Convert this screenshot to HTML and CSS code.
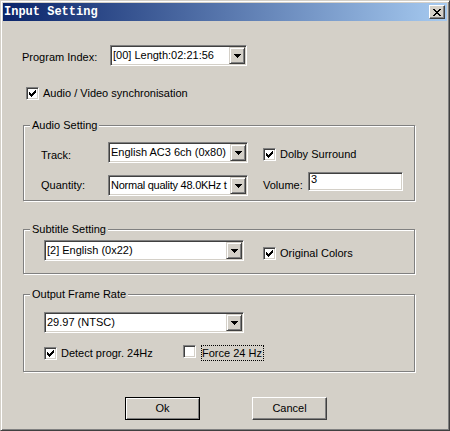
FILE: index.html
```html
<!DOCTYPE html>
<html>
<head>
<meta charset="utf-8">
<title>Input Setting</title>
<link rel="stylesheet" href="styles.css">
</head>
<body>
<div class="window">
  <div class="titlebar">
    <span class="title">Input Setting</span>
    <span class="close-btn"><svg width="8" height="7" viewBox="0 0 8 7" shape-rendering="crispEdges"><path d="M0 0h2v1h-2zM6 0h2v1h-2zM1 1h2v1h-2zM5 1h2v1h-2zM2 2h4v1h-4zM3 3h2v1h-2zM2 4h4v1h-4zM1 5h2v1h-2zM5 5h2v1h-2zM0 6h2v1h-2zM6 6h2v1h-2z" fill="#000"/></svg></span>
  </div>
  <div class="content">
    <div class="row program-row">
      <span class="lbl lbl-program">Program Index:</span>
      <div class="combo combo-program">
        <span class="combo-text">[00] Length:02:21:56</span>
        <span class="combo-btn"><svg width="7" height="4" viewBox="0 0 7 4" shape-rendering="crispEdges"><path d="M0 0h7v1h-7zM1 1h5v1h-5zM2 2h3v1h-3zM3 3h1v1h-1z" fill="#000"/></svg></span>
      </div>
    </div>

    <div class="check sync-check">
      <span class="box"><svg width="7" height="7" viewBox="0 0 7 7" shape-rendering="crispEdges"><path d="M6 0h1v1h-1zM5 1h2v1h-2zM0 2h1v1h-1zM4 2h3v1h-3zM0 3h2v1h-2zM3 3h3v1h-3zM0 4h5v1h-5zM1 5h3v1h-3zM2 6h1v1h-1z" fill="#000"/></svg></span>
      <span class="check-text">Audio / Video synchronisation</span>
    </div>

    <fieldset class="group audio-group">
      <legend>Audio Setting</legend>
      <div class="group-body audio-body">
        <div class="row track-row">
          <span class="lbl lbl-track">Track:</span>
          <div class="combo combo-audio">
            <span class="combo-text">English AC3 6ch (0x80)</span>
            <span class="combo-btn"><svg width="7" height="4" viewBox="0 0 7 4" shape-rendering="crispEdges"><path d="M0 0h7v1h-7zM1 1h5v1h-5zM2 2h3v1h-3zM3 3h1v1h-1z" fill="#000"/></svg></span>
          </div>
          <div class="check dolby-check">
            <span class="box"><svg width="7" height="7" viewBox="0 0 7 7" shape-rendering="crispEdges"><path d="M6 0h1v1h-1zM5 1h2v1h-2zM0 2h1v1h-1zM4 2h3v1h-3zM0 3h2v1h-2zM3 3h3v1h-3zM0 4h5v1h-5zM1 5h3v1h-3zM2 6h1v1h-1z" fill="#000"/></svg></span>
            <span class="check-text">Dolby Surround</span>
          </div>
        </div>
        <div class="row quantity-row">
          <span class="lbl lbl-quantity">Quantity:</span>
          <div class="combo combo-audio">
            <span class="combo-text tight">Normal quality 48.0KHz t</span>
            <span class="combo-btn"><svg width="7" height="4" viewBox="0 0 7 4" shape-rendering="crispEdges"><path d="M0 0h7v1h-7zM1 1h5v1h-5zM2 2h3v1h-3zM3 3h1v1h-1z" fill="#000"/></svg></span>
          </div>
          <span class="lbl lbl-volume">Volume:</span>
          <div class="textbox"><span class="textbox-text">3</span></div>
        </div>
      </div>
    </fieldset>

    <fieldset class="group subtitle-group">
      <legend>Subtitle Setting</legend>
      <div class="group-body subtitle-body">
        <div class="row subtitle-row">
          <div class="combo combo-wide">
            <span class="combo-text">[2] English (0x22)</span>
            <span class="combo-btn"><svg width="7" height="4" viewBox="0 0 7 4" shape-rendering="crispEdges"><path d="M0 0h7v1h-7zM1 1h5v1h-5zM2 2h3v1h-3zM3 3h1v1h-1z" fill="#000"/></svg></span>
          </div>
          <div class="check colors-check">
            <span class="box"><svg width="7" height="7" viewBox="0 0 7 7" shape-rendering="crispEdges"><path d="M6 0h1v1h-1zM5 1h2v1h-2zM0 2h1v1h-1zM4 2h3v1h-3zM0 3h2v1h-2zM3 3h3v1h-3zM0 4h5v1h-5zM1 5h3v1h-3zM2 6h1v1h-1z" fill="#000"/></svg></span>
            <span class="check-text">Original Colors</span>
          </div>
        </div>
      </div>
    </fieldset>

    <fieldset class="group output-group">
      <legend>Output Frame Rate</legend>
      <div class="group-body output-body">
        <div class="row">
          <div class="combo combo-wide">
            <span class="combo-text">29.97 (NTSC)</span>
            <span class="combo-btn"><svg width="7" height="4" viewBox="0 0 7 4" shape-rendering="crispEdges"><path d="M0 0h7v1h-7zM1 1h5v1h-5zM2 2h3v1h-3zM3 3h1v1h-1z" fill="#000"/></svg></span>
          </div>
        </div>
        <div class="row checks-row">
          <div class="check detect-check">
            <span class="box"><svg width="7" height="7" viewBox="0 0 7 7" shape-rendering="crispEdges"><path d="M6 0h1v1h-1zM5 1h2v1h-2zM0 2h1v1h-1zM4 2h3v1h-3zM0 3h2v1h-2zM3 3h3v1h-3zM0 4h5v1h-5zM1 5h3v1h-3zM2 6h1v1h-1z" fill="#000"/></svg></span>
            <span class="check-text">Detect progr. 24Hz</span>
          </div>
          <div class="check force-check">
            <span class="box"></span>
            <span class="check-text focus">Force 24 Hz</span>
          </div>
        </div>
      </div>
    </fieldset>

    <div class="buttons">
      <span class="btn btn-default">Ok</span>
      <span class="btn">Cancel</span>
    </div>
  </div>
</div>
</body>
</html>
```

FILE: styles.css
```css
* {
  box-sizing: border-box;
}

html,
body {
  margin: 0;
  padding: 0;
}

body {
  width: 450px;
  height: 431px;
  overflow: hidden;
  background: #d4d0c8;
  font-family: "Liberation Sans", Arial, sans-serif;
  font-size: 11px;
  line-height: 13px;
  color: #000;
}

svg {
  display: block;
}

.window {
  width: 450px;
  height: 431px;
  background: #d4d0c8;
  border: 1px solid;
  border-color: #d4d0c8 #404040 #404040 #d4d0c8;
  box-shadow: inset 1px 1px 0 #fff, inset -1px -1px 0 #808080;
  padding: 2px;
  display: flex;
  flex-direction: column;
}

/* Title bar */
.titlebar {
  height: 18px;
  flex: none;
  background: linear-gradient(to right, #0a246a, #a6caf0);
  display: flex;
  align-items: center;
  justify-content: space-between;
  padding: 0 2px 0 1px;
}

.title {
  font-family: "Liberation Mono", "DejaVu Sans Mono", monospace;
  font-weight: bold;
  font-size: 12px;
  line-height: 18px;
  color: #fff;
}

.close-btn {
  width: 16px;
  height: 14px;
  background: #d4d0c8;
  border: 1px solid;
  border-color: #fff #404040 #404040 #fff;
  box-shadow: inset -1px -1px 0 #808080;
  display: flex;
  align-items: center;
  justify-content: center;
}

/* Content */
.content {
  padding: 24px 0 0 19px;
  display: flex;
  flex-direction: column;
  align-items: flex-start;
}

.row {
  display: flex;
  align-items: flex-start;
}

.lbl {
  white-space: nowrap;
}

.lbl-program {
  width: 88px;
  margin-top: 6px;
}

/* Combo box */
.combo {
  height: 21px;
  background: #fff;
  border: 1px solid;
  border-color: #808080 #fff #fff #808080;
  box-shadow: inset 1px 1px 0 #404040, inset -1px -1px 0 #d4d0c8;
  padding: 1px;
  display: flex;
  flex: none;
}

.combo-program {
  width: 137px;
}

.combo-audio {
  width: 140px;
}

.combo-wide {
  width: 200px;
}

.combo-text {
  flex: 1;
  min-width: 0;
  overflow: hidden;
  white-space: nowrap;
  line-height: 17px;
  padding-left: 1px;
}

.combo-text.tight {
  letter-spacing: -0.25px;
}

.combo-btn {
  width: 16px;
  height: 17px;
  flex: none;
  background: #d4d0c8;
  border: 1px solid;
  border-color: #d4d0c8 #404040 #404040 #d4d0c8;
  box-shadow: inset 1px 1px 0 #fff, inset -1px -1px 0 #808080;
  display: flex;
  align-items: center;
  justify-content: center;
}

/* Checkbox */
.check {
  display: flex;
  align-items: flex-start;
  gap: 4px;
  white-space: nowrap;
}

.box {
  width: 13px;
  height: 13px;
  flex: none;
  background: #fff;
  border: 1px solid;
  border-color: #808080 #fff #fff #808080;
  box-shadow: inset 1px 1px 0 #404040, inset -1px -1px 0 #d4d0c8;
  padding: 2px;
}

.check-text {
  line-height: 13px;
}

.sync-check {
  margin: 21px 0 0 4px;
}

/* Group boxes */
.group {
  width: 392px;
  margin: 0 0 0 1px;
  padding: 0;
  border: 1px solid #808080;
  box-shadow: inset 1px 1px 0 #fff, 1px 1px 0 #fff;
  min-inline-size: auto;
}

.group legend {
  margin-left: 6px;
  padding: 0 2px;
  line-height: 13px;
  background: #d4d0c8;
}

.audio-group {
  margin-top: 19px;
}

.audio-body {
  padding: 10px 0 4px 17px;
}

.lbl-track {
  width: 67px;
  margin-top: 7px;
}

.lbl-quantity {
  width: 67px;
  margin-top: 4px;
}

.dolby-check {
  margin: 6px 0 0 15px;
}

.quantity-row {
  margin-top: 12px;
}

.lbl-volume {
  width: 45px;
  margin: 4px 0 0 15px;
}

.textbox {
  width: 95px;
  height: 19px;
  margin-top: -3px;
  background: #fff;
  border: 1px solid;
  border-color: #808080 #fff #fff #808080;
  box-shadow: inset 1px 1px 0 #404040, inset -1px -1px 0 #d4d0c8;
  padding: 1px 2px;
}

.textbox-text {
  display: block;
  line-height: 11px;
}

.subtitle-group {
  margin-top: 22px;
}

.subtitle-body {
  padding: 4px 0 12px 20px;
}

.colors-check {
  margin: 7px 0 0 19px;
}

.output-group {
  margin-top: 14px;
}

.output-body {
  padding: 11px 0 10px 20px;
}

.checks-row {
  margin-top: 12px;
  align-items: center;
}

.detect-check {
  width: 139px;
}

.focus {
  border: 1px dotted #000;
  padding: 0 1px 0 0;
  margin-left: 1px;
  line-height: 14px;
}

/* Buttons */
.buttons {
  margin: 25px 0 0 103px;
  display: flex;
  gap: 52px;
}

.btn {
  width: 75px;
  height: 23px;
  display: flex;
  align-items: center;
  justify-content: center;
  background: #d4d0c8;
  border: 1px solid;
  border-color: #fff #404040 #404040 #fff;
  box-shadow: inset -1px -1px 0 #808080;
}

.btn-default {
  border-color: #000;
  box-shadow: inset 1px 1px 0 #fff, inset -1px -1px 0 #808080;
}
```
